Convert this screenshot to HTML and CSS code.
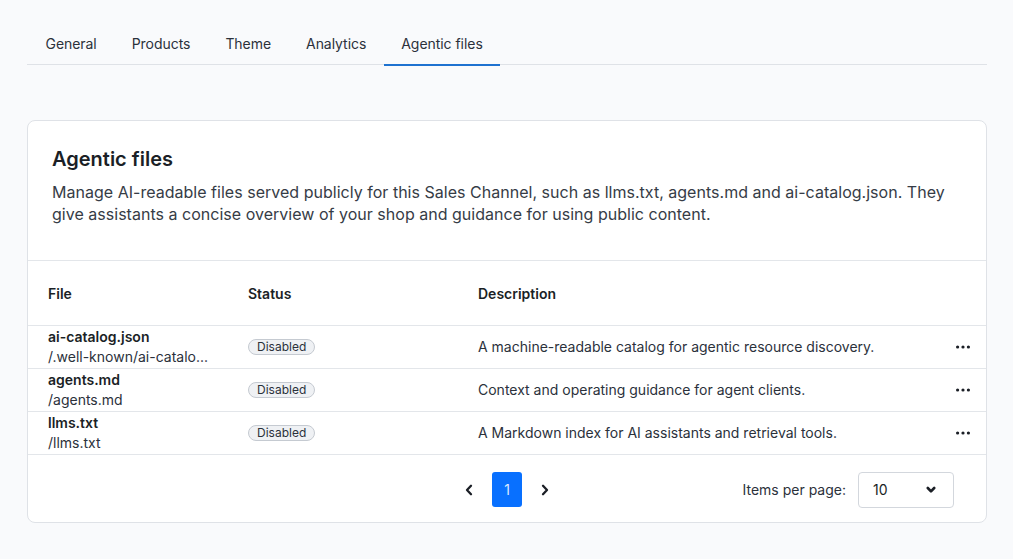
FILE: index.html
```html
<!DOCTYPE html>
<html lang="en">
<head>
<meta charset="utf-8">
<title>Agentic files</title>
<link rel="stylesheet" href="styles.css">
</head>
<body>
<div class="page">
  <nav class="tabs">
    <a class="tab">General</a>
    <a class="tab">Products</a>
    <a class="tab">Theme</a>
    <a class="tab">Analytics</a>
    <a class="tab active">Agentic files</a>
  </nav>

  <section class="card">
    <header class="card-header">
      <h2 class="card-title">Agentic files</h2>
      <p class="card-desc">Manage AI-readable files served publicly for this Sales Channel, such as llms.txt, agents.md and ai-catalog.json. They give assistants a concise overview of your shop and guidance for using public content.</p>
    </header>

    <table class="grid">
      <thead>
        <tr>
          <th class="col-file">File</th>
          <th class="col-status">Status</th>
          <th class="col-desc">Description</th>
          <th class="col-act"></th>
        </tr>
      </thead>
      <tbody>
        <tr>
          <td class="col-file"><div class="fname">ai-catalog.json</div><div class="fpath">/.well-known/ai-catalo...</div></td>
          <td class="col-status"><span class="badge">Disabled</span></td>
          <td class="col-desc">A machine-readable catalog for agentic resource discovery.</td>
          <td class="col-act"><svg class="dots" width="14" height="4" viewBox="0 0 14 4"><circle cx="1.6" cy="2" r="1.6"/><circle cx="7" cy="2" r="1.6"/><circle cx="12.4" cy="2" r="1.6"/></svg></td>
        </tr>
        <tr>
          <td class="col-file"><div class="fname">agents.md</div><div class="fpath">/agents.md</div></td>
          <td class="col-status"><span class="badge">Disabled</span></td>
          <td class="col-desc">Context and operating guidance for agent clients.</td>
          <td class="col-act"><svg class="dots" width="14" height="4" viewBox="0 0 14 4"><circle cx="1.6" cy="2" r="1.6"/><circle cx="7" cy="2" r="1.6"/><circle cx="12.4" cy="2" r="1.6"/></svg></td>
        </tr>
        <tr>
          <td class="col-file"><div class="fname">llms.txt</div><div class="fpath">/llms.txt</div></td>
          <td class="col-status"><span class="badge">Disabled</span></td>
          <td class="col-desc">A Markdown index for AI assistants and retrieval tools.</td>
          <td class="col-act"><svg class="dots" width="14" height="4" viewBox="0 0 14 4"><circle cx="1.6" cy="2" r="1.6"/><circle cx="7" cy="2" r="1.6"/><circle cx="12.4" cy="2" r="1.6"/></svg></td>
        </tr>
      </tbody>
    </table>

    <footer class="card-footer">
      <div class="pager">
        <button class="pg-arrow" aria-label="Previous">
          <svg width="10" height="12" viewBox="0 0 10 12"><path d="M7 1.8 L3 6 L7 10.2" fill="none" stroke="#1b1f26" stroke-width="2.3" stroke-linecap="round" stroke-linejoin="round"/></svg>
        </button>
        <button class="pg-num">1</button>
        <button class="pg-arrow" aria-label="Next">
          <svg width="10" height="12" viewBox="0 0 10 12"><path d="M3 1.8 L7 6 L3 10.2" fill="none" stroke="#1b1f26" stroke-width="2.3" stroke-linecap="round" stroke-linejoin="round"/></svg>
        </button>
      </div>
      <div class="perpage">
        <span class="perpage-label">Items per page:</span>
        <div class="select">
          <span>10</span>
          <svg width="10" height="8" viewBox="0 0 10 8"><path d="M1.8 2 L5 5.4 L8.2 2" fill="none" stroke="#1b1f26" stroke-width="2.6" stroke-linecap="round" stroke-linejoin="round"/></svg>
        </div>
      </div>
    </footer>
  </section>
</div>
</body>
</html>
```

FILE: styles.css
```css
* { box-sizing: border-box; }
html, body { margin: 0; padding: 0; }
body {
  background: #f9fafc;
  font-family: Inter, "Noto Sans", "Liberation Sans", sans-serif;
  color: #1b1f26;
  width: 1013px;
  height: 559px;
  overflow: hidden;
}
.page {
  padding: 26px 26px 0 27px;
}
.tabs {
  display: flex;
  border-bottom: 1px solid #dfe2e7;
  height: 39px;
}
.tab {
  display: block;
  padding: 9px 17.5px 0 17.5px;
  font-size: 14px;
  line-height: 18px;
  letter-spacing: -0.05px;
  color: #2b313b;
  height: 39px;
}
.tab:first-child { padding-left: 18.5px; }
.tab.active {
  border-bottom: 2px solid #1e72d0;
  height: 40px;
}
.card {
  margin-top: 55px;
  background: #fff;
  border: 1px solid #dfe2e7;
  border-radius: 8px;
  width: 960px;
  overflow: hidden;
}
.card-header {
  padding: 26px 24px 35px 24px;
  border-bottom: 1px solid #e3e6ea;
}
.card-title {
  margin: 0;
  font-size: 20px;
  line-height: 24px;
  font-weight: 600;
  color: #1b1f26;
}
.card-desc {
  margin: 10px 0 0 0;
  font-size: 16px;
  line-height: 22px;
  color: #363c46;
  letter-spacing: 0.02px;
}
.grid {
  width: 100%;
  border-collapse: collapse;
  font-size: 14px;
}
.grid th {
  text-align: left;
  font-weight: 600;
  height: 64px;
  padding: 1px 0 0 0;
  color: #1b1f26;
  border-bottom: 1px solid #e3e6ea;
}
.grid td {
  height: 43px;
  padding: 0;
  border-bottom: 1px solid #e3e6ea;
  color: #2b313b;
  vertical-align: middle;
}
.col-file { padding-left: 20px !important; width: 220px; }
.col-status { width: 230px; }
.col-desc { width: 452px; }
.grid .col-act { text-align: right; padding-right: 16px; }
.fname {
  font-weight: 600;
  line-height: 19px;
  color: #1b1f26;
  margin-top: 1px;
}
.fpath {
  line-height: 21px;
  color: #2b313b;
}
.badge {
  display: inline-block;
  font-size: 12px;
  line-height: 14px;
  padding: 0 8px;
  border: 1px solid #c5cad1;
  background: #eff1f4;
  border-radius: 999px;
  color: #2b313b;
  position: relative;
  top: -1px;
}
.dots {
  display: inline-block;
  fill: #1b1f26;
  vertical-align: middle;
  position: relative;
  top: -1px;
}
.card-footer {
  display: flex;
  align-items: center;
  height: 67px;
  padding: 3px 32px 0 436px;
  justify-content: space-between;
}
.pager {
  display: flex;
  align-items: center;
  gap: 18px;
}
.pg-arrow {
  border: 0;
  background: none;
  padding: 0;
  width: 10px;
  height: 14px;
  display: flex;
  align-items: center;
  justify-content: center;
}
.pg-num {
  border: 0;
  width: 30px;
  height: 35px;
  border-radius: 3px;
  background: #0870ff;
  color: #dce9ff;
  font-family: inherit;
  font-size: 14px;
}
.perpage {
  display: flex;
  align-items: center;
  gap: 12px;
}
.perpage-label {
  font-size: 14px;
  color: #2b313b;
}
.select {
  width: 96px;
  height: 36px;
  border: 1px solid #d3d7dd;
  border-radius: 4px;
  display: flex;
  align-items: center;
  justify-content: space-between;
  padding: 0 17px 0 14px;
  font-size: 14px;
  color: #1b1f26;
}
```
